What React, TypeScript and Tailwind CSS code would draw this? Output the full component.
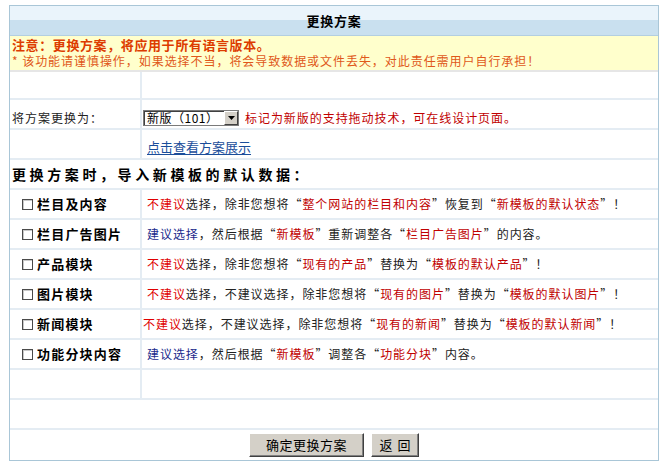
import React from "react";

type Seg = [string, string?];

const R = "text-[#e00000]";
const D = "text-[#c00000]";
const B = "text-[#1a2a8c]";

const items: { label: string; pad?: string; segs: Seg[] }[] = [
  {
    label: "栏目及内容",
    segs: [["不建议", R], ["选择，除非您想将“"], ["整个网站的栏目和内容", D], ["”恢复到“"], ["新模板的默认状态", D], ["”！"]],
  },
  {
    label: "栏目广告图片",
    segs: [["建议选择", B], ["，然后根据“"], ["新模板", D], ["”重新调整各“"], ["栏目广告图片", D], ["”的内容。"]],
  },
  {
    label: "产品模块",
    segs: [["不建议", R], ["选择，除非您想将“"], ["现有的产品", D], ["”替换为“"], ["模板的默认产品", D], ["”！"]],
  },
  {
    label: "图片模块",
    segs: [["不建议", R], ["选择，不建议选择，除非您想将“"], ["现有的图片", D], ["”替换为“"], ["模板的默认图片", D], ["”！"]],
  },
  {
    label: "新闻模块",
    pad: "pl-[1px]",
    segs: [["不建议", R], ["选择，不建议选择，除非您想将“"], ["现有的新闻", D], ["”替换为“"], ["模板的默认新闻", D], ["”！"]],
  },
  {
    label: "功能分块内容",
    segs: [["建议选择", B], ["，然后根据“"], ["新模板", D], ["”调整各“"], ["功能分块", D], ["”内容。"]],
  },
];

function Row({ left, right, h = "h-[30px]", align = "items-center" }: { left?: React.ReactNode; right?: React.ReactNode; h?: string; align?: string }) {
  return (
    <div className={`flex ${h} border-b-2 border-[#e4ecf3]`}>
      <div className={`w-[132px] shrink-0 border-r-2 border-[#e4ecf3] flex ${align}`}>{left}</div>
      <div className={`flex-1 flex ${align}`}>{right}</div>
    </div>
  );
}

function Checkbox() {
  return <span className="inline-block w-[11px] h-[11px] border border-[#4a4a4a] bg-white shadow-[inset_1px_1px_0_#c8c8c8]" />;
}

export default function App() {
  return (
    <div className="w-[672px] h-[471px] bg-white pt-[5px] pl-[9px] text-[12px] text-[#222] font-['Noto_Sans_CJK_SC',sans-serif] leading-[14px]">
      <div className="w-[650px] border border-[#a9c6d7]">
        {/* header */}
        <div className="h-[30px] border-b border-[#b3cfe0] bg-[linear-gradient(#eaf4fb_0%,#eaf4fb_48%,#c9e0ef_48%,#c9e0ef_100%)] flex items-center justify-center">
          <span className="text-[13px] font-bold tracking-[0.75px] text-black">更换方案</span>
        </div>

        {/* notice */}
        <div className="h-[36px] bg-[#ffffcc] border-b-2 border-[#e6e6e6] pl-[2px] flex flex-col justify-center">
          <div className="text-[13px] leading-[16px] font-bold tracking-[0.6px] text-[#dd3c00]">注意：更换方案，将应用于所有语言版本。</div>
          <div className="leading-[16px] tracking-[0.95px] text-[#e0581a]">* 该功能请谨慎操作，如果选择不当，将会导致数据或文件丢失，对此责任需用户自行承担！</div>
        </div>

        <Row h="h-[28px]" />

        <Row
          align="items-center pt-[8px]"
          left={<span className="pl-[2px] tracking-[1px]">将方案更换为：</span>}
          right={
            <div className="flex items-center">
              <div className="ml-[1px] w-[96px] h-[16px] border border-[#7a7a7a] shadow-[inset_1px_1px_0_#404040] bg-white flex items-center">
                <span className="flex-1 pl-[3px] text-black tracking-[0.5px]">新版（101）</span>
                <span className="w-[14px] h-[14px] bg-[#d4d0c8] border border-t-white border-l-white border-r-[#404040] border-b-[#404040] flex items-center justify-center">
                  <svg width="7" height="4" viewBox="0 0 7 4"><path d="M0 0h7L3.5 4z" fill="#000" /></svg>
                </span>
              </div>
              <span className="ml-[6px] tracking-[0.95px] text-[#c00000]">标记为新版的支持拖动技术，可在线设计页面。</span>
            </div>
          }
        />

        <Row
          align="items-center pt-[6px]"
          right={<a className="pl-[5px] text-[13px] text-[#1a4d9a] underline underline-offset-2">点击查看方案展示</a>}
        />

        <div className="h-[30px] border-b-2 border-[#e4ecf3] flex items-center pl-[2px]">
          <span className="text-[14px] font-bold tracking-[3.6px] text-black">更换方案时，导入新模板的默认数据：</span>
        </div>

        {items.map((it) => (
          <Row
            key={it.label}
            left={
              <div className="pl-[12px] flex items-center gap-[4px]">
                <Checkbox />
                <span className="text-[13px] font-bold tracking-[1.2px] text-black">{it.label}</span>
              </div>
            }
            right={
              <span className={`${it.pad ?? "pl-[5px]"} tracking-[0.95px]`}>
                {it.segs.map(([t, c], i) => (
                  <span key={i} className={c}>{t}</span>
                ))}
              </span>
            }
          />
        ))}

        <Row />

        <div className="h-[30px] border-b-2 border-[#e4ecf3]" />

        <div className="h-[30px] flex items-start justify-center gap-[7px] pt-[3px]">
          <button className="w-[115px] h-[24px] bg-[#d4d0c8] border border-t-white border-l-white border-r-[#404040] border-b-[#404040] shadow-[inset_-1px_-1px_0_#808080] text-[13px] text-black tracking-[0.5px]">
            确定更换方案
          </button>
          <button className="w-[48px] h-[24px] bg-[#d4d0c8] border border-t-white border-l-white border-r-[#404040] border-b-[#404040] shadow-[inset_-1px_-1px_0_#808080] text-[13px] text-black tracking-[5px] pl-[5px]">
            返回
          </button>
        </div>
      </div>
    </div>
  );
}
